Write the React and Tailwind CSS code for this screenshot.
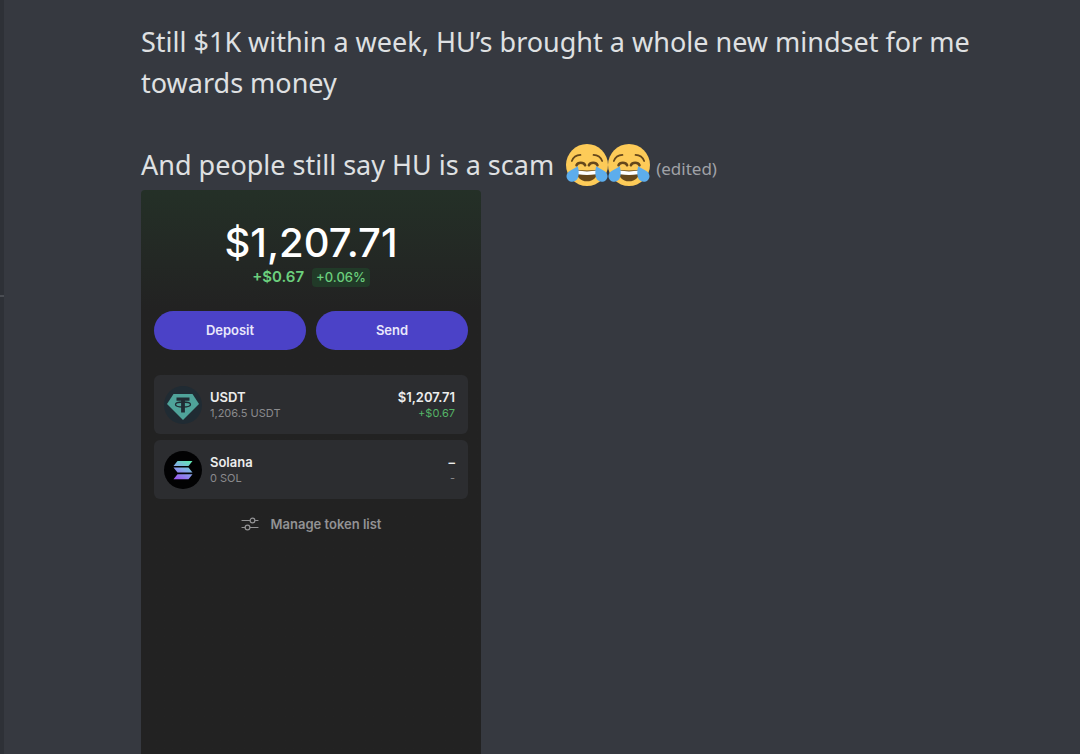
import React from 'react';

const JoyEmoji = () => (
    <svg viewBox="0 0 36 36" role="img" aria-label="face with tears of joy" className="inline-block h-[42px] w-[42px] align-middle">
        <circle cx="18" cy="18" r="18" fill="#fdcb58" />
        <g fill="none" stroke="#65471b" strokeLinecap="round">
            <path d="M5 14.6C6.200 11.400 8.800 9.600 12.400 9.400" strokeWidth="1.500" />
            <path d="M31 14.600C29.800 11.400 27.200 9.600 23.600 9.400" strokeWidth="1.500" />
            <path d="M9 18.200C10.200 15.300 15.200 15.300 16.400 18.200" strokeWidth="2.200" />
            <path d="M19.600 18.200C20.800 15.300 25.800 15.300 27 18.200" strokeWidth="2.200" />
        </g>
        <path d="M9 22Q18 23.400 27 22C27.500 28 23.500 32 18 32S8.500 28 9 22Z" fill="#65471b" />
        <path d="M9.700 22.800Q18 24.200 26.300 22.800Q26.500 25 25.700 26Q18 27.300 10.300 26Q9.500 25 9.700 22.800Z" fill="#fff" />
        <path d="M10.200 19C11 22.500 11.400 27.500 9.600 30.200C7.900 32.700 4 33 1.900 31C-.5 28.700.2 25.200 2.800 23.300C5 21.700 8 20.500 10.200 19Z" fill="#5dadec" />
        <path d="M25.800 19C25 22.500 24.600 27.500 26.400 30.200C28.100 32.700 32 33 34.100 31C36.500 28.700 35.800 25.200 33.200 23.300C31 21.700 28 20.500 25.800 19Z" fill="#5dadec" />
    </svg>
);

const TetherLogo = () => (
    <svg viewBox="0 0 38 38" aria-hidden="true" className="h-[38px] w-[38px] shrink-0">
        <circle cx="19" cy="19" r="19" fill="#202b33" />
        <path d="M9.500 8H28.500L35 18L19 34L3 18Z" fill="#4fa39a" />
        <path d="M12.500 11.500H25.500V14.800H20.900V26.500H17.100V14.800H12.500Z" fill="#202b33" />
        <ellipse cx="19" cy="18.500" rx="7.500" ry="2.500" fill="none" stroke="#202b33" strokeWidth="1.300" />
    </svg>
);

const SolanaLogo = () => (
    <svg viewBox="0 0 38 38" aria-hidden="true" className="h-[38px] w-[38px] shrink-0">
        <defs>
            <linearGradient id="solana" x1="25" y1="10" x2="16" y2="29" gradientUnits="userSpaceOnUse">
                <stop offset="0" stopColor="#62e8b4" />
                <stop offset=".5" stopColor="#86a6ea" />
                <stop offset="1" stopColor="#985aee" />
            </linearGradient>
        </defs>
        <circle cx="19" cy="19" r="19" fill="#020203" />
        <g fill="url(#solana)">
            <path d="M13.500 10H28.500L24.500 15H9.500Z" />
            <path d="M9.500 16.600H24.500L28.500 21.600H13.500Z" />
            <path d="M13.500 23.200H28.500L24.500 28.200H9.500Z" />
        </g>
    </svg>
);

const SlidersIcon = () => (
    <svg viewBox="0 0 18 16" fill="none" stroke="currentColor" strokeWidth="1.200" strokeLinecap="round" aria-hidden="true" className="h-4 w-[18px]">
        <path d="M1 4.500H9M14 4.500H17M1 11.500H4M9 11.500H17" />
        <circle cx="11.500" cy="4.500" r="2.400" />
        <circle cx="6.500" cy="11.500" r="2.400" />
    </svg>
);

const tokens = [
    { name: 'USDT', balance: '1,206.5 USDT', value: '$1,207.71', change: '+$0.67', up: true, Logo: TetherLogo },
    { name: 'Solana', balance: '0 SOL', value: '–', change: '-', up: false, Logo: SolanaLogo },
];

const TokenRow = ({ name, balance, value, change, up, Logo }) => (
    <li className="flex min-h-[59px] items-center gap-2 rounded-md bg-[#2c2d30] pr-[13px] pl-[10px]">
        <Logo />
        <div className="flex-1">
            <p className="text-[13px] leading-4 font-semibold text-[#ededed]">{name}</p>
            <p className="text-[11px] leading-4 text-[#8a8a8d]">{balance}</p>
        </div>
        <div className="text-right">
            <p className="text-[13px] leading-4 font-semibold text-[#ededed]">{value}</p>
            <p className={`text-[11px] leading-4 ${up ? 'text-[#55b567]' : 'text-[#8a8a8d]'}`}>{change}</p>
        </div>
    </li>
);

const Wallet = () => (
    <section className="w-[340px] max-w-full flex-1 rounded-t-sm bg-[#222222] bg-linear-to-b from-[#243027] to-[#222222] to-[120px] px-[13px] pt-[30px] font-['Inter','Liberation_Sans',sans-serif]">
        <h1 className="text-center text-[40px] leading-[46px] font-medium text-white">$1,207.71</h1>
        <div className="flex items-center justify-center gap-2 pt-[1px] leading-5 text-[#6bcf7d]">
            <span className="text-[15px] font-semibold">+$0.67</span>
            <span className="rounded bg-[#213a28] px-1 text-[13px] leading-[19px] font-medium">+0.06%</span>
        </div>
        <div className="mt-6 flex gap-[10px]">
            <button type="button" className="h-[39px] flex-1 rounded-full bg-[#4b42c7] text-[13px] font-semibold text-[#e9e7fb]">Deposit</button>
            <button type="button" className="h-[39px] flex-1 rounded-full bg-[#4b42c7] text-[13px] font-semibold text-[#e9e7fb]">Send</button>
        </div>
        <ul className="mt-[25px] flex flex-col gap-[6px]">
            {tokens.map((token) => (
                <TokenRow key={token.name} {...token} />
            ))}
        </ul>
        <button type="button" className="mx-auto mt-[15px] flex items-center gap-3 text-[13px] leading-5 font-semibold text-[#929294]">
            <SlidersIcon />
            Manage token list
        </button>
    </section>
);

const App = () => (
    <div className="flex min-h-screen bg-[#363940]">
        {/* edge of the channel list */}
        <aside className="w-1 shrink-0 bg-[#2e3137]">
            <div className="mt-[295px] h-[2px] bg-[#4a4d53]"></div>
        </aside>
        <main className="flex flex-1 flex-col pt-[21px] pr-20 pl-[137px]">
            <div className="mb-[5px] font-['Noto_Sans','Open_Sans',sans-serif] text-[27px] leading-[41px] text-[#dfe0e2]">
                <p>Still $1K within a week, HU’s brought a whole new mindset for me towards money</p>
                <p className="mt-[41px] flex h-[41px] items-center">
                    <span className="mr-3">And people still say HU is a scam</span>
                    <JoyEmoji />
                    <JoyEmoji />
                    <span className="ml-[6px] pt-2 text-[17px] text-[#a0a2a7]">(edited)</span>
                </p>
            </div>
            <Wallet />
        </main>
    </div>
);

export default App;
